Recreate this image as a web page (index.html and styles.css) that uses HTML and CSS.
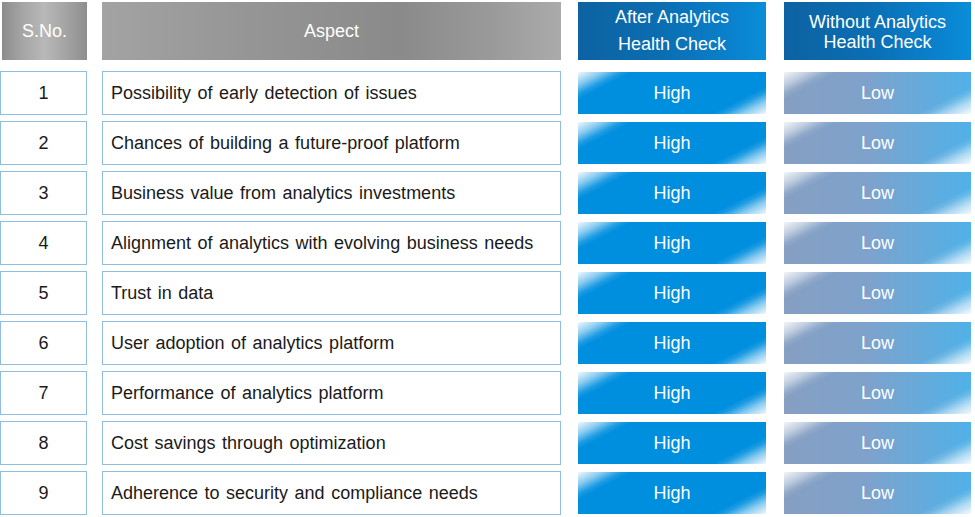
FILE: index.html
```html
<!DOCTYPE html>
<html>
<head>
<meta charset="utf-8">
<link rel="stylesheet" href="styles.css">
</head>
<body>
<div class="table">
  <div class="row head">
    <div class="hd hd-sno">S.No.</div>
    <div class="hd hd-aspect">Aspect</div>
    <div class="hd hd-blue hd-after">After Analytics<br>Health Check</div>
    <div class="hd hd-blue hd-without">Without Analytics<br>Health Check</div>
  </div>
  <div class="body">
    <div class="row"><div class="cell num">1</div><div class="cell aspect">Possibility of early detection of issues</div><div class="val high">High</div><div class="val low">Low</div></div>
    <div class="row"><div class="cell num">2</div><div class="cell aspect">Chances of building a future-proof platform</div><div class="val high">High</div><div class="val low">Low</div></div>
    <div class="row"><div class="cell num">3</div><div class="cell aspect">Business value from analytics investments</div><div class="val high">High</div><div class="val low">Low</div></div>
    <div class="row"><div class="cell num">4</div><div class="cell aspect">Alignment of analytics with evolving business needs</div><div class="val high">High</div><div class="val low">Low</div></div>
    <div class="row"><div class="cell num">5</div><div class="cell aspect">Trust in data</div><div class="val high">High</div><div class="val low">Low</div></div>
    <div class="row"><div class="cell num">6</div><div class="cell aspect">User adoption of analytics platform</div><div class="val high">High</div><div class="val low">Low</div></div>
    <div class="row"><div class="cell num">7</div><div class="cell aspect">Performance of analytics platform</div><div class="val high">High</div><div class="val low">Low</div></div>
    <div class="row"><div class="cell num">8</div><div class="cell aspect">Cost savings through optimization</div><div class="val high">High</div><div class="val low">Low</div></div>
    <div class="row"><div class="cell num">9</div><div class="cell aspect">Adherence to security and compliance needs</div><div class="val high">High</div><div class="val low">Low</div></div>
  </div>
</div>
</body>
</html>
```
FILE: styles.css
```css
html, body {
  margin: 0;
  padding: 0;
  background: #ffffff;
}
body {
  font-family: "Liberation Sans", Arial, sans-serif;
  font-size: 18px;
  color: #1a1a1a;
}
.table {
  display: flex;
  flex-direction: column;
  gap: 11px;
  padding-top: 2px;
}
.body {
  display: flex;
  flex-direction: column;
  gap: 6px;
}
.row {
  display: grid;
  grid-template-columns: 87px 459px 189px 187px;
  column-gap: 15px;
  height: 44px;
}
.row > :nth-child(3) { margin-left: 2px; margin-right: -1px; }
.row > :nth-child(4) { margin-left: 4px; margin-right: -4px; }
.row.head { height: 58px; }
.hd {
  display: flex;
  align-items: center;
  justify-content: center;
  text-align: center;
  color: #ffffff;
}
.hd-sno {
  margin-left: 2px;
  background: linear-gradient(to right, #8c8c8c 0%, #a6a6a6 25%, #b8b8b8 50%, #a4a4a4 75%, #8e8e8e 100%);
}
.hd-aspect {
  background: linear-gradient(to right, #a3a3a3 0%, #969696 30%, #8a8a8a 65%, #9a9a9a 85%, #ababab 100%);
}
.hd-blue {
  background: linear-gradient(to right, #0d62a2 0%, #0b6eb2 45%, #0a80cc 80%, #0a8ed8 100%);
  line-height: 27px;
}
.hd-without { line-height: 20px; padding-top: 2px; box-sizing: border-box; }
.cell {
  border: 1px solid #8fbfe0;
  display: flex;
  align-items: center;
  box-sizing: border-box;
  word-spacing: 1.5px;
}
.num { justify-content: center; }
.aspect { padding-left: 8px; }
.val {
  display: flex;
  align-items: center;
  justify-content: center;
  color: #ffffff;
  margin-top: 1px;
  margin-bottom: 1px;
}
.high {
  background:
    linear-gradient(153deg, rgba(255,255,255,0.95) 0%, rgba(255,255,255,0.55) 9%, rgba(255,255,255,0.12) 16%, rgba(255,255,255,0) 20%, rgba(255,255,255,0) 80%, rgba(255,255,255,0.12) 84%, rgba(255,255,255,0.55) 91%, rgba(255,255,255,0.95) 100%),
    #008fdf;
}
.low {
  background:
    linear-gradient(153deg, rgba(255,255,255,0.9) 0%, rgba(255,255,255,0.5) 9%, rgba(255,255,255,0.1) 16%, rgba(255,255,255,0) 20%, rgba(255,255,255,0) 80%, rgba(255,255,255,0.12) 84%, rgba(255,255,255,0.55) 91%, rgba(255,255,255,0.95) 100%),
    linear-gradient(to right, #869fc2 0%, #7ea2cc 45%, #64abdc 75%, #4fb1e8 100%);
}
```
